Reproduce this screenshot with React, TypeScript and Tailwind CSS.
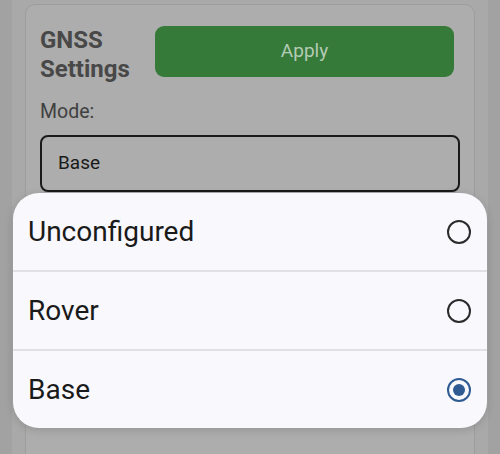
import React from "react";

function Radio({ checked }: { checked: boolean }) {
  return (
    <svg width="26" height="26" viewBox="0 0 26 26">
      <circle cx="13" cy="13" r="11" fill="none" stroke={checked ? "#2f5a92" : "#2b2b2b"} strokeWidth="2" />
      {checked && <circle cx="13" cy="13" r="6" fill="#2f5a92" />}
    </svg>
  );
}

export default function App() {
  const items = ["Unconfigured", "Rover", "Base"];
  return (
    <div className="relative w-[500px] h-[454px] overflow-hidden bg-[#a2a2a2] px-[12px]" style={{ fontFamily: "Roboto, 'Noto Sans', sans-serif" }}>
      <div className="h-full bg-[#a9a9a9] px-[13px] pt-[4px]">
        <div className="h-[470px] rounded-[10px] border border-[#9d9d9d] bg-[#adadad] pl-[14px] pr-[14px] pt-[21px]">
          <div className="flex items-start gap-[24px]">
            <div className="w-[91px] shrink-0 text-[24px] font-bold leading-[29px] text-[#484848] whitespace-nowrap">GNSS<br />Settings</div>
            <button className="mr-[6px] flex h-[51px] flex-1 items-center justify-center rounded-[9px] bg-[#367a3a] text-[19px] text-[#b4cbb4]">
              Apply
            </button>
          </div>
          <div className="mt-[16px] text-[19.5px] leading-[24px] text-[#404040]">Mode:</div>
          <div className="mt-[11px] flex h-[57px] items-center rounded-[8px] border-2 border-[#1a1a1a] px-[16px] text-[19px] text-[#1a1a1a]">
            Base
          </div>
        </div>
      </div>
      <div className="absolute left-[13px] top-[193px] w-[474px] overflow-hidden rounded-[26px] bg-[#f8f8fd] shadow-[0_2px_8px_rgba(0,0,0,0.15)]">
        {items.map((it, i) => (
          <div key={it}>
            {i > 0 && <div className="h-[2px] bg-[#e0e0e6]" />}
            <div className="flex h-[77px] items-center justify-between pl-[15px] pr-[15px]">
              <span className="text-[28px] text-[#1a1a1a]">{it}</span>
              <Radio checked={it === "Base"} />
            </div>
          </div>
        ))}
      </div>
    </div>
  );
}
